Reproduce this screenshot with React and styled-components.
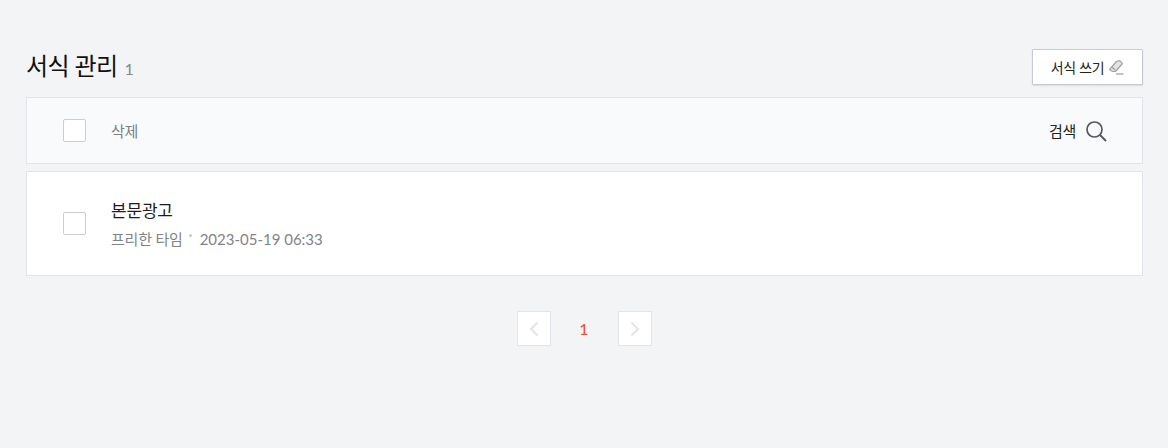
import styled, { createGlobalStyle } from 'styled-components';

const GlobalStyle = createGlobalStyle`
  body {
    margin: 0;
    background-color: #f3f4f6;
    font-family: Lato, "Noto Sans CJK KR", sans-serif;
  }
`;

const Page = styled.main`
  width: 1117px;
  margin-left: 26px;
  padding-top: 49px;
  padding-bottom: 102px;
`;

const Header = styled.header`
  display: flex;
  justify-content: space-between;
  align-items: center;
  height: 36px;
  margin-bottom: 12px;
`;

const Title = styled.h1`
  margin: 0;
  padding-top: 1px;
  font-size: 24px;
  font-weight: 400;
  line-height: 36px;
  letter-spacing: -0.6px;
  color: #0f0f0f;
`;

const Count = styled.span`
  margin-left: 7px;
  font-size: 16px;
  letter-spacing: 0;
  color: #7f8a8a;
`;

const WriteButton = styled.button`
  display: flex;
  align-items: center;
  justify-content: center;
  gap: 4px;
  box-sizing: border-box;
  width: 111px;
  height: 36px;
  padding: 0;
  border: 1px solid #c5cad3;
  border-radius: 1px;
  background-color: #fff;
  box-shadow: 0 1px 2px rgba(0, 0, 0, 0.1);
  font-family: inherit;
  font-size: 14px;
  letter-spacing: -0.3px;
  color: #222;
`;

const Panel = styled.section`
  display: flex;
  align-items: center;
  box-sizing: border-box;
  padding-left: 36px;
  border: 1px solid #e1e4ea;
  background-color: ${(p) => (p.$tinted ? '#f9fafc' : '#fff')};
  height: ${(p) => p.$height}px;
  margin-bottom: ${(p) => p.$gap || 0}px;
`;

const Box = styled.span`
  flex: none;
  box-sizing: border-box;
  width: 23px;
  height: 23px;
  margin-right: 25px;
  border: 1px solid #c9ced6;
  border-radius: 2px;
  background-color: #fff;
`;

const DeleteLabel = styled.span`
  font-size: 15px;
  letter-spacing: -0.3px;
  color: #7b7f85;
`;

const SearchArea = styled.div`
  display: flex;
  align-items: center;
  gap: 9px;
  margin-left: auto;
  margin-right: 35px;
  font-size: 15px;
  letter-spacing: -0.3px;
  color: #222;
`;

const Item = styled.div`
  display: flex;
  flex-direction: column;
  gap: 4px;
`;

const ItemTitle = styled.div`
  font-size: 17px;
  line-height: 26px;
  letter-spacing: -0.2px;
  color: #1c1c1c;
`;

const Meta = styled.div`
  display: flex;
  align-items: center;
  font-size: 15px;
  line-height: 22px;
  color: #7f8489;
`;

const Author = styled.span`
  letter-spacing: -0.2px;
`;

const Dot = styled.span`
  width: 3px;
  height: 3px;
  margin: 0 8px 6px 6px;
  border-radius: 50%;
  background-color: #c6c9ce;
`;

const Pager = styled.nav`
  display: flex;
  justify-content: center;
  align-items: center;
  margin-top: 35px;
  padding-right: 1px;
`;

const PageButton = styled.span`
  display: flex;
  align-items: center;
  justify-content: center;
  box-sizing: border-box;
  width: 34px;
  height: 35px;
  border: 1px solid #e1e4ea;
  background-color: #fff;
`;

const CurrentPage = styled.span`
  width: 67px;
  text-align: center;
  font-size: 16px;
  font-weight: 500;
  color: #f5503c;
`;

const PencilIcon = () => (
  <svg width="16" height="16" viewBox="0 0 16 16" fill="none">
    <path d="M1.5 10.5 8.5 2.5 l3 -1 3 3 -7 8 H4.5 Z" fill="#e3e3e3" stroke="#a3a3a3" strokeWidth="1.2" strokeLinejoin="round" />
    <path d="M4 8 7.5 11.5" stroke="#a3a3a3" strokeWidth="1.2" />
    <path d="M8 15 H15.5" stroke="#a3a3a3" strokeWidth="1.3" />
  </svg>
);

const SearchIcon = () => (
  <svg width="22" height="22" viewBox="0 0 22 22" fill="none" stroke="#55595e">
    <circle cx="9.5" cy="9.5" r="7.5" strokeWidth="1.7" />
    <path d="M15 15 L21 21" strokeWidth="2" />
  </svg>
);

const Chevron = ({ flip }) => (
  <svg width="10" height="16" viewBox="0 0 10 16" fill="none" stroke="#e3e6eb" strokeWidth="2.2">
    <path d={flip ? 'M1.5 1.5 8 8 1.5 14.5' : 'M8.5 1.5 2 8 8.5 14.5'} />
  </svg>
);

export default function App() {
  return (
    <>
      <GlobalStyle />
      <Page>
        <Header>
          <Title>
            서식 관리<Count>1</Count>
          </Title>
          <WriteButton>
            서식 쓰기
            <PencilIcon />
          </WriteButton>
        </Header>
        <Panel $tinted $height={67} $gap={7}>
          <Box />
          <DeleteLabel>삭제</DeleteLabel>
          <SearchArea>
            검색
            <SearchIcon />
          </SearchArea>
        </Panel>
        <Panel $height={105}>
          <Box />
          <Item>
            <ItemTitle>본문광고</ItemTitle>
            <Meta>
              <Author>프리한 타임</Author>
              <Dot />
              2023-05-19 06:33
            </Meta>
          </Item>
        </Panel>
        <Pager>
          <PageButton>
            <Chevron />
          </PageButton>
          <CurrentPage>1</CurrentPage>
          <PageButton>
            <Chevron flip />
          </PageButton>
        </Pager>
      </Page>
    </>
  );
}
